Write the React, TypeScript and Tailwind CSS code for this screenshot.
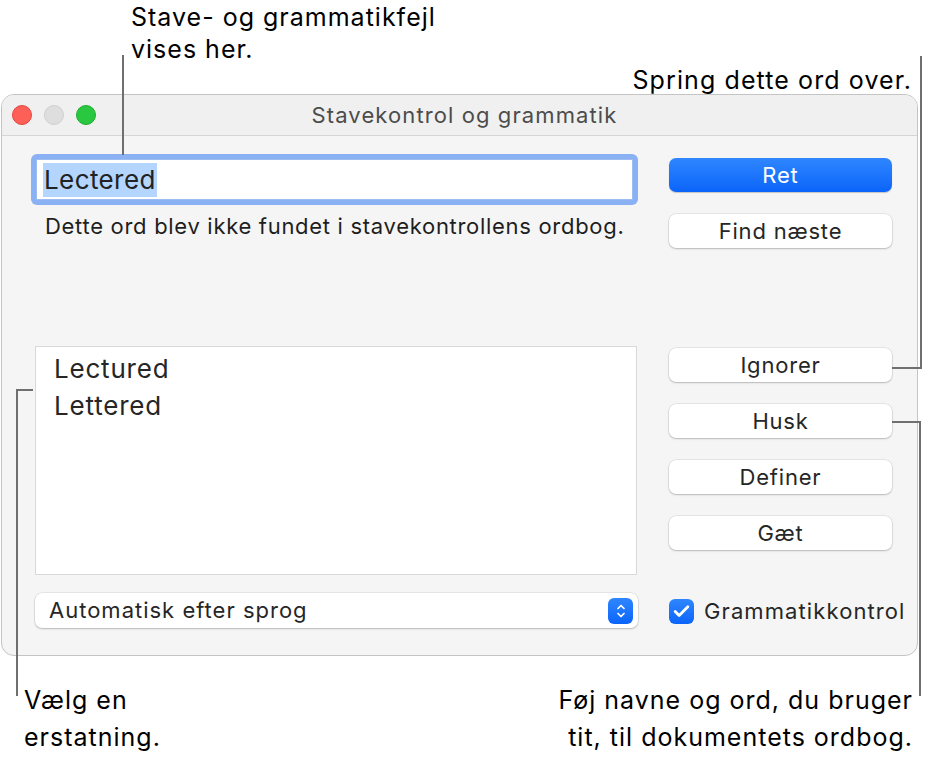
import { Check, ChevronDown, ChevronUp } from 'lucide-react';

const font = { fontFamily: 'Inter, "Noto Sans", sans-serif' };

function MacButton({ label, primary = false }: { label: string; primary?: boolean }) {
  if (primary) {
    return (
      <div className="h-[34px] w-[223px] rounded-[7px] bg-gradient-to-b from-[#2f86ff] to-[#0a64fa] shadow-[0_1px_1px_rgba(0,0,0,0.2)] flex items-center justify-center text-white text-[22px] tracking-[0.8px]">
        {label}
      </div>
    );
  }
  return (
    <div className="h-[34px] w-[223px] rounded-[7px] bg-white shadow-[0_0_0_0.5px_rgba(0,0,0,0.12),0_1px_2px_rgba(0,0,0,0.2)] flex items-center justify-center text-[#262626] text-[22px] tracking-[0.8px]">
      {label}
    </div>
  );
}

export default function App() {
  return (
    <div className="relative w-[931px] h-[761px] bg-white text-black overflow-hidden" style={font}>
      {/* Top callouts */}
      <div className="h-[94px] flex justify-between">
        <div className="pl-[131px] pt-[1px] text-[25px] leading-[32px] tracking-[1px]">
          Stave- og grammatikfejl
          <br />
          vises her.
        </div>
        <div className="self-end mb-[-2px] pr-[19px] text-[25px] leading-[32px] tracking-[1.1px]">Spring dette ord over.</div>
      </div>

      {/* Window */}
      <div className="ml-[1px] w-[917px] h-[562px] rounded-[13px] border border-[#c4c4c4] bg-[#f5f5f5] overflow-hidden flex flex-col">
        <div className="h-[41px] shrink-0 relative flex items-center justify-center pl-[10px] bg-[#f0f0f0] border-b border-[#d6d6d6]">
          <div className="absolute left-[10px] top-[10px] flex gap-[12px]">
            <div className="w-[20px] h-[20px] rounded-full bg-[#fe5f57] border border-[#e2463f]" />
            <div className="w-[20px] h-[20px] rounded-full bg-[#dedede] border border-[#cfcfcf]" />
            <div className="w-[20px] h-[20px] rounded-full bg-[#29c840] border border-[#1eab2f]" />
          </div>
          <span className="text-[22px] tracking-[1.1px] text-[#4c4c4c]">Stavekontrol og grammatik</span>
        </div>

        <div className="flex flex-1">
          {/* Left column */}
          <div className="ml-[29px] w-[607px] flex flex-col pt-[18px]">
            <div className="h-[51px] rounded-[6px] bg-[#8ab1f3] p-[5px]">
              <div className="h-full bg-white border border-[#9cbcf2] flex items-center pl-[6px]">
                <span className="bg-[#b4d6fe] text-[26px] leading-[34px] tracking-[0.4px] text-[#222] px-[1px]">Lectered</span>
              </div>
            </div>
            <div className="mt-[9px] pl-[14px] text-[22px] leading-[24px] tracking-[0.7px] text-[#1e1e1e]">
              Dette ord blev ikke fundet i stavekontrollens ordbog.
            </div>
            <div className="mt-[108px] ml-[4px] w-[602px] h-[229px] bg-white border border-[#d9d9d9] pl-[18px] pt-[3px] text-[26px] leading-[37px] tracking-[0.8px] text-[#262626]">
              <div>Lectured</div>
              <div>Lettered</div>
            </div>
            <div className="mt-[18px] ml-[4px] w-[603px] h-[35px] rounded-[7px] bg-white shadow-[0_0_0_0.5px_rgba(0,0,0,0.12),0_1px_2px_rgba(0,0,0,0.2)] flex items-center justify-between pl-[14px] pr-[5px]">
              <span className="text-[22px] tracking-[1px] text-[#262626]">Automatisk efter sprog</span>
              <div className="w-[25px] h-[26px] rounded-[6px] bg-gradient-to-b from-[#2f86ff] to-[#0a64fa] flex flex-col items-center justify-center text-white">
                <ChevronUp size={12} strokeWidth={3.5} className="-mb-[2px]" />
                <ChevronDown size={12} strokeWidth={3.5} className="-mt-[2px]" />
              </div>
            </div>
          </div>

          {/* Right column */}
          <div className="ml-[31px] flex flex-col pt-[22px]">
            <MacButton label="Ret" primary />
            <div className="mt-[22px]">
              <MacButton label="Find næste" />
            </div>
            <div className="mt-[100px] flex flex-col gap-[22px]">
              <MacButton label="Ignorer" />
              <MacButton label="Husk" />
              <MacButton label="Definer" />
              <MacButton label="Gæt" />
            </div>
            <div className="mt-[45px] flex items-center gap-[10px]">
              <div className="w-[25px] h-[25px] rounded-[6px] bg-gradient-to-b from-[#2f86ff] to-[#0a64fa] flex items-center justify-center text-white">
                <Check size={19} strokeWidth={3.5} />
              </div>
              <span className="text-[22px] tracking-[1.1px] text-[#262626] whitespace-nowrap">Grammatikkontrol</span>
            </div>
          </div>
        </div>
      </div>

      {/* Bottom callouts */}
      <div className="flex justify-between pt-[26px]">
        <div className="pl-[24px] text-[25px] leading-[37px] tracking-[1px]">
          Vælg en
          <br />
          erstatning.
        </div>
        <div className="pr-[18px] text-right text-[25px] leading-[37px] tracking-[1px]">
          Føj navne og ord, du bruger
          <br />
          tit, til dokumentets ordbog.
        </div>
      </div>

      {/* Leader lines */}
      <svg className="absolute inset-0 pointer-events-none" width="931" height="761" fill="none" stroke="#6f6f6f" strokeWidth="2">
        <path d="M123 55 V155" />
        <path d="M921 56 V368 H892" />
        <path d="M892 422 H920 V696" />
        <path d="M33 390 H17 V696" />
      </svg>
    </div>
  );
}
